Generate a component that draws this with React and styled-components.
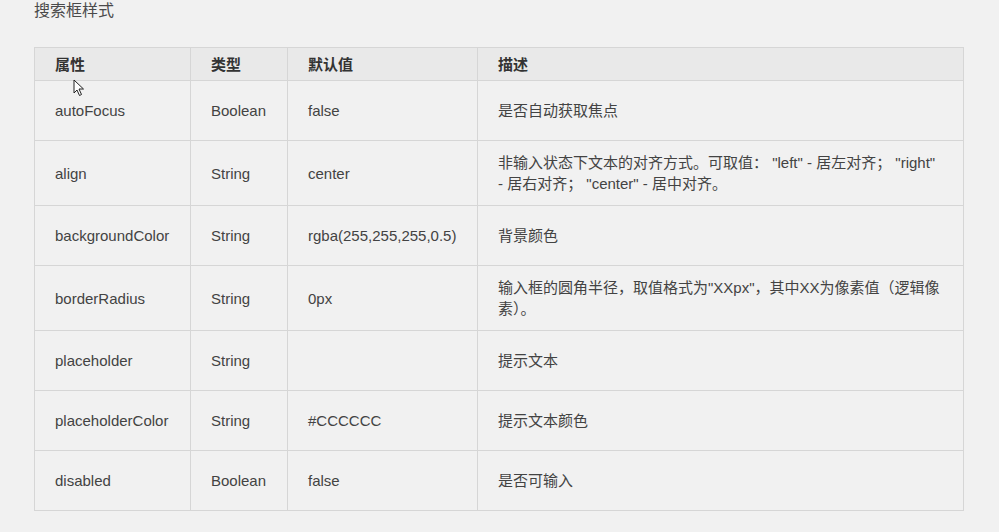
import React from 'react';
import styled, { createGlobalStyle } from 'styled-components';

const GlobalStyle = createGlobalStyle`
  html, body {
    margin: 0;
    padding: 0;
    background: #f1f1f1;
  }
  body {
    font-family: "Liberation Sans", "Noto Sans CJK SC", sans-serif;
  }
`;

const Page = styled.div`
  position: relative;
  width: 999px;
  height: 532px;
  overflow: hidden;
  padding-left: 34px;
  box-sizing: border-box;
  background: #f1f1f1;
`;

const Title = styled.h3`
  margin: 0;
  font-size: 16px;
  line-height: 21px;
  font-weight: normal;
  color: #4a4a4a;
`;

const Table = styled.table`
  margin-top: 26px;
  width: 929px;
  table-layout: fixed;
  border-collapse: collapse;
  font-size: 15px;
  line-height: 21px;
  color: #434343;
`;

const HeadCell = styled.th`
  text-align: left;
  font-weight: bold;
  color: #333;
  background: #e9e9e9;
  padding: 6px 20px 5px;
  border: 1px solid #d6d6d6;
`;

const Row = styled.tr`
  height: ${(p) => (p.$tall ? 65 : 60)}px;
`;

const Cell = styled.td`
  padding: 11px 20px;
  border: 1px solid #d6d6d6;
  vertical-align: middle;
  word-break: break-word;
`;

const Cursor = styled.svg`
  position: absolute;
  left: 73px;
  top: 79px;
`;

const rows = [
  ['autoFocus', 'Boolean', 'false', '是否自动获取焦点'],
  ['align', 'String', 'center', '非输入状态下文本的对齐方式。可取值： "left" - 居左对齐； "right" - 居右对齐； "center" - 居中对齐。', true],
  ['backgroundColor', 'String', 'rgba(255,255,255,0.5)', '背景颜色'],
  ['borderRadius', 'String', '0px', '输入框的圆角半径，取值格式为"XXpx"，其中XX为像素值（逻辑像素）。', true],
  ['placeholder', 'String', '', '提示文本'],
  ['placeholderColor', 'String', '#CCCCCC', '提示文本颜色'],
  ['disabled', 'Boolean', 'false', '是否可输入'],
];

export default function App() {
  return (
    <Page>
      <GlobalStyle />
      <Title>搜索框样式</Title>
      <Table>
        <colgroup>
          <col style={{ width: 156 }} />
          <col style={{ width: 97 }} />
          <col style={{ width: 190 }} />
          <col style={{ width: 486 }} />
        </colgroup>
        <thead>
          <tr>
            <HeadCell>属性</HeadCell>
            <HeadCell>类型</HeadCell>
            <HeadCell>默认值</HeadCell>
            <HeadCell>描述</HeadCell>
          </tr>
        </thead>
        <tbody>
          {rows.map(([name, type, def, desc, tall]) => (
            <Row key={name} $tall={tall}>
              <Cell>{name}</Cell>
              <Cell>{type}</Cell>
              <Cell>{def}</Cell>
              <Cell>{desc}</Cell>
            </Row>
          ))}
        </tbody>
      </Table>
      <Cursor width="12" height="18" viewBox="0 0 12 18">
        <path d="M1 1 L1 14 L4 11 L6.5 16.5 L8.5 15.5 L6 10 L10.5 10 Z" fill="#fff" stroke="#222" strokeWidth="1" strokeLinejoin="round" />
      </Cursor>
    </Page>
  );
}
